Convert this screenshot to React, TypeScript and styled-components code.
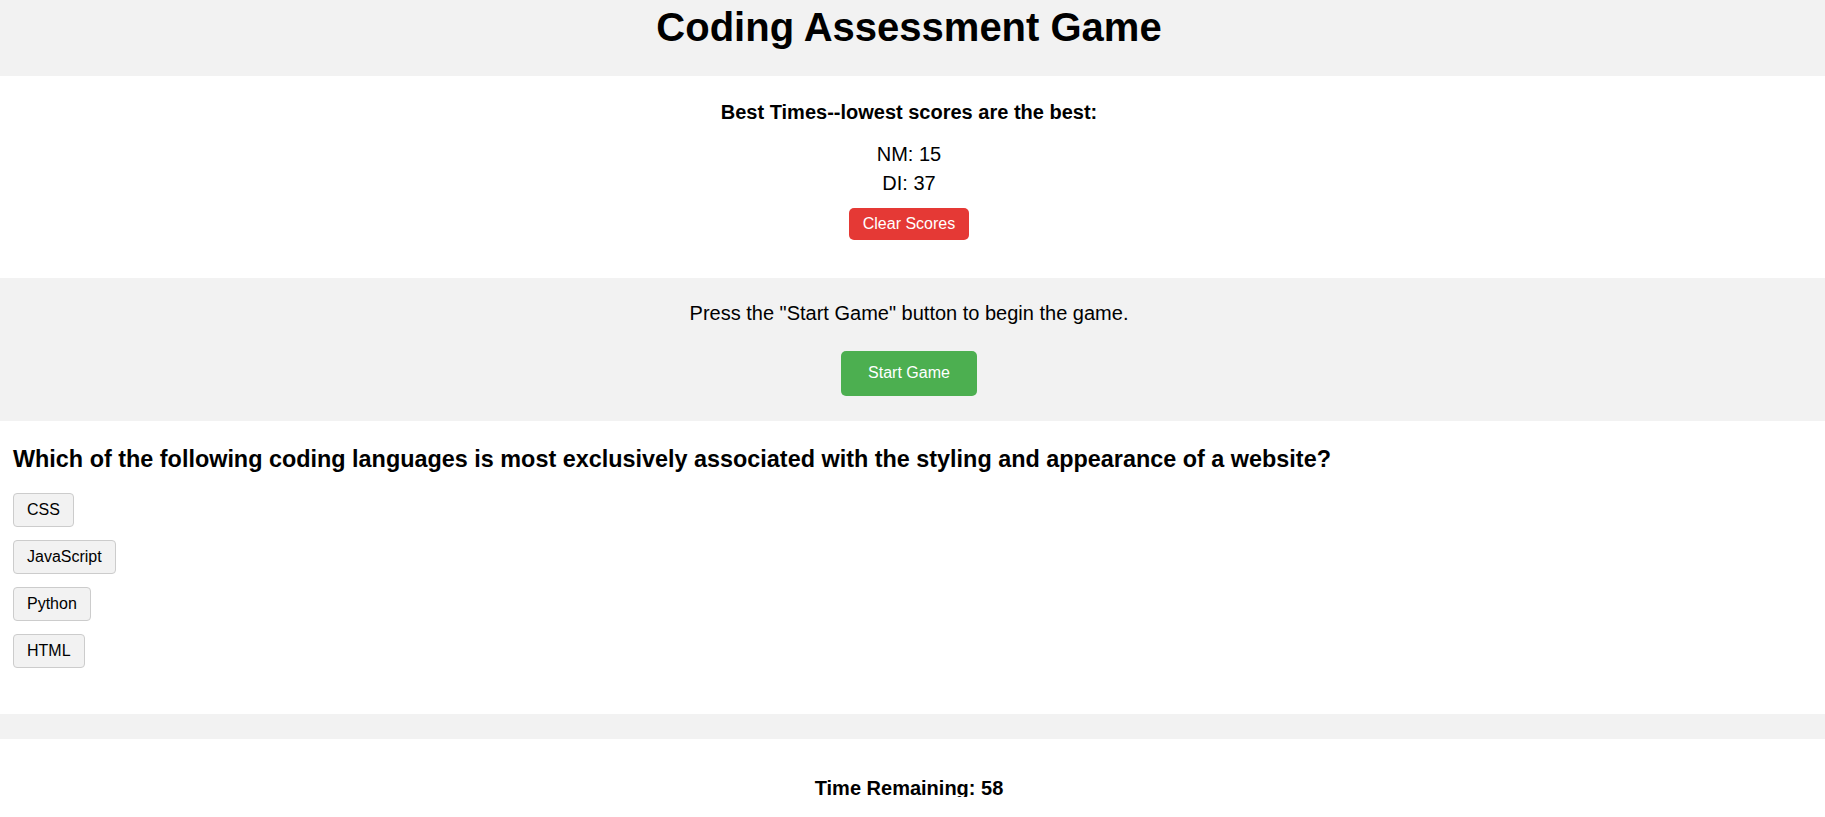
import React from "react";
import styled, { createGlobalStyle } from "styled-components";

const GlobalStyle = createGlobalStyle`
  html, body {
    margin: 0;
    padding: 0;
    background: #ffffff;
  }
  body {
    font-family: "Liberation Sans", Arial, sans-serif;
    color: #000000;
  }
  * {
    box-sizing: border-box;
  }
`;

const Page = styled.div`
  display: flex;
  flex-direction: column;
  width: 100%;
`;

const Header = styled.header`
  background: #f2f2f2;
  height: 76px;
  padding: 4px 7px 0 0;
  text-align: center;
`;

const Title = styled.h1`
  margin: 0;
  font-size: 40px;
  line-height: 46px;
  font-weight: 700;
`;

const Band = styled.section<{ $tone: "white" | "gray" }>`
  display: flex;
  flex-direction: column;
  align-items: center;
  background: ${(p) => (p.$tone === "gray" ? "#f2f2f2" : "#ffffff")};
`;

const ScoresBand = styled(Band)`
  padding: 25px 7px 37.8px 0;
`;

const ScoresHeading = styled.h3`
  margin: 0 0 16px;
  font-size: 20px;
  line-height: 23px;
  font-weight: 700;
`;

const ScoreList = styled.ul`
  list-style: none;
  margin: 0 0 9px;
  padding: 0;
  text-align: center;
  font-size: 20px;
  line-height: 29.3px;
`;

const ActionButton = styled.button<{ $variant: "danger" | "success" }>`
  border: none;
  border-radius: 5px;
  color: #ffffff;
  font-family: inherit;
  font-size: 16px;
  line-height: 18.6px;
  cursor: pointer;
  background: ${(p) => (p.$variant === "danger" ? "#e53935" : "#4caf50")};
  padding: ${(p) => (p.$variant === "danger" ? "7px 14px" : "13px 27px")};
`;

const StartBand = styled(Band)`
  padding: 24px 7px 25.4px 0;
`;

const Instructions = styled.p`
  margin: 0 0 26px;
  font-size: 20px;
  line-height: 23px;
`;

const QuizBand = styled(Band)`
  align-items: flex-start;
  padding: 23.6px 13px 45.7px;
`;

const Question = styled.h2`
  margin: 0 0 20.7px;
  font-size: 23.4px;
  line-height: 28px;
  font-weight: 700;
`;

const Choices = styled.div`
  display: flex;
  flex-direction: column;
  align-items: flex-start;
  gap: 13px;
`;

const ChoiceButton = styled.button`
  background: #f2f2f2;
  border: 1px solid #cccccc;
  border-radius: 4px;
  padding: 7px 13px;
  font-family: inherit;
  font-size: 16px;
  line-height: 18px;
  color: #000000;
  cursor: pointer;
`;

const Divider = styled.div`
  height: 25px;
  background: #f2f2f2;
`;

const Footer = styled.footer`
  height: 58px;
  overflow: hidden;
  padding: 38px 7px 0 0;
  text-align: center;
`;

const TimeText = styled.h3`
  margin: 0;
  font-size: 20px;
  line-height: 23px;
  font-weight: 700;
`;

const scores = [
  { initials: "NM", time: 15 },
  { initials: "DI", time: 37 },
];

const choices = ["CSS", "JavaScript", "Python", "HTML"];

export default function App() {
  return (
    <>
      <GlobalStyle />
      <Page>
        <Header>
          <Title>Coding Assessment Game</Title>
        </Header>

        <ScoresBand $tone="white">
          <ScoresHeading>Best Times--lowest scores are the best:</ScoresHeading>
          <ScoreList>
            {scores.map((s) => (
              <li key={s.initials}>
                {s.initials}: {s.time}
              </li>
            ))}
          </ScoreList>
          <ActionButton $variant="danger">Clear Scores</ActionButton>
        </ScoresBand>

        <StartBand $tone="gray">
          <Instructions>Press the "Start Game" button to begin the game.</Instructions>
          <ActionButton $variant="success">Start Game</ActionButton>
        </StartBand>

        <QuizBand $tone="white">
          <Question>
            Which of the following coding languages is most exclusively associated with the
            styling and appearance of a website?
          </Question>
          <Choices>
            {choices.map((c) => (
              <ChoiceButton key={c}>{c}</ChoiceButton>
            ))}
          </Choices>
        </QuizBand>

        <Divider />

        <Footer>
          <TimeText>Time Remaining: 58</TimeText>
        </Footer>
      </Page>
    </>
  );
}
